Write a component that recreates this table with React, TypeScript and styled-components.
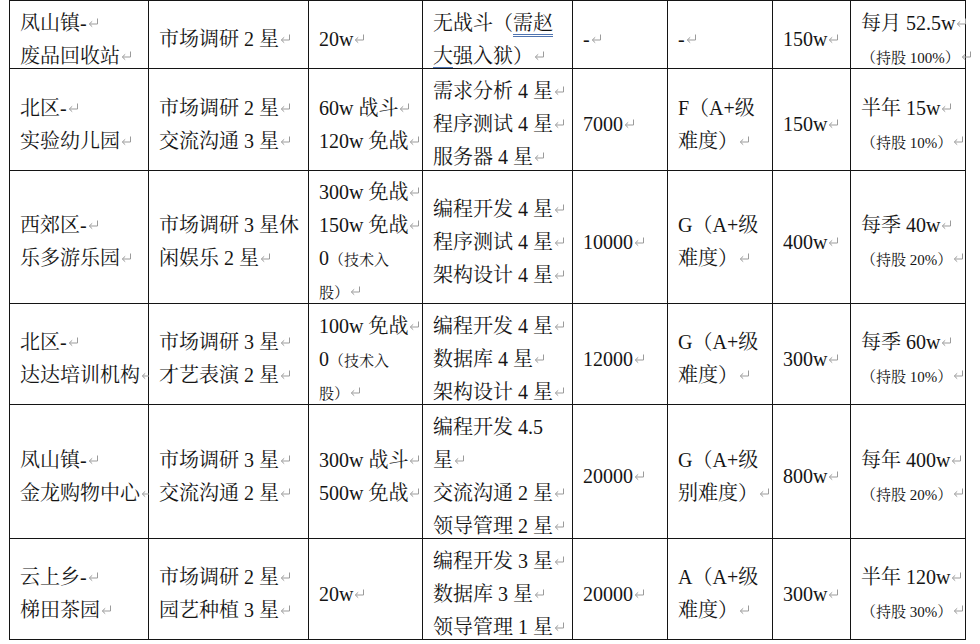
import React from "react";
import styled, { createGlobalStyle } from "styled-components";

const GlobalStyle = createGlobalStyle`
  html, body {
    margin: 0;
    padding: 0;
    background: #ffffff;
  }
  body {
    font-family: "Liberation Serif", "Noto Serif CJK SC", "Noto Sans CJK SC", serif;
  }
`;

type Seg = string | { text: string; small?: boolean; underline?: boolean };
type LineData = { segs: Seg[]; mark: boolean };

const L = (...segs: Seg[]): LineData => ({ segs, mark: true });
const W = (...segs: Seg[]): LineData => ({ segs, mark: false });
const sm = (text: string): Seg => ({ text, small: true });
const ul = (text: string): Seg => ({ text, underline: true });

const rows: LineData[][][] = [
  [
    [L("凤山镇-"), L("废品回收站")],
    [L("市场调研 2 星")],
    [L("20w")],
    [W("无战斗（", ul("需赵")), L(ul("大"), "强入狱）")],
    [L("-")],
    [L("-")],
    [L("150w")],
    [L("每月 52.5w"), L(sm("（持股 100%）"))],
  ],
  [
    [L("北区-"), L("实验幼儿园")],
    [L("市场调研 2 星"), L("交流沟通 3 星")],
    [L("60w 战斗"), L("120w 免战")],
    [L("需求分析 4 星"), L("程序测试 4 星"), L("服务器 4 星")],
    [L("7000")],
    [W("F（A+级"), L("难度）")],
    [L("150w")],
    [L("半年 15w"), L(sm("（持股 10%）"))],
  ],
  [
    [L("西郊区-"), L("乐多游乐园")],
    [W("市场调研 3 星休"), L("闲娱乐 2 星")],
    [L("300w 免战"), L("150w 免战"), W("0", sm("（技术入")), L(sm("股）"))],
    [L("编程开发 4 星"), L("程序测试 4 星"), L("架构设计 4 星")],
    [L("10000")],
    [W("G（A+级"), L("难度）")],
    [L("400w")],
    [L("每季 40w"), L(sm("（持股 20%）"))],
  ],
  [
    [L("北区-"), L("达达培训机构")],
    [L("市场调研 3 星"), L("才艺表演 2 星")],
    [L("100w 免战"), W("0", sm("（技术入")), L(sm("股）"))],
    [L("编程开发 4 星"), L("数据库 4 星"), L("架构设计 4 星")],
    [L("12000")],
    [W("G（A+级"), L("难度）")],
    [L("300w")],
    [L("每季 60w"), L(sm("（持股 10%）"))],
  ],
  [
    [L("凤山镇-"), L("金龙购物中心")],
    [L("市场调研 3 星"), L("交流沟通 2 星")],
    [L("300w 战斗"), L("500w 免战")],
    [W("编程开发 4.5"), L("星"), L("交流沟通 2 星"), L("领导管理 2 星")],
    [L("20000")],
    [W("G（A+级"), L("别难度）")],
    [L("800w")],
    [L("每年 400w"), L(sm("（持股 20%）"))],
  ],
  [
    [L("云上乡-"), L("梯田茶园")],
    [L("市场调研 2 星"), L("园艺种植 3 星")],
    [L("20w")],
    [L("编程开发 3 星"), L("数据库 3 星"), L("领导管理 1 星")],
    [L("20000")],
    [W("A（A+级"), L("难度）")],
    [L("300w")],
    [L("半年 120w"), L(sm("（持股 30%）"))],
  ],
];

const Page = styled.div`
  padding: 0 0 0 9px;
`;

const Table = styled.div`
  display: grid;
  grid-template-columns: 138px 159px 113px 149px 94px 104px 77px 114px;
  grid-template-rows: 67px 101px 132px 100px 133px 100px;
  gap: 1px;
  padding: 1px;
  width: fit-content;
  background: #141414;
`;

const Cell = styled.div`
  background: #ffffff;
  display: flex;
  flex-direction: column;
  justify-content: center;
  padding: 10px 2px 0 10px;
  min-width: 0;
  font-size: 20px;
  color: #151515;
`;

const Line = styled.div`
  line-height: 33px;
  height: 33px;
  white-space: nowrap;
`;

const Small = styled.span`
  font-size: 15px;
`;

const Marked = styled.span`
  text-decoration: underline double #4f74b0;
  text-decoration-thickness: 1px;
  text-underline-offset: 4px;
`;

const MarkSvg = styled.svg`
  display: inline-block;
  width: 11px;
  height: 9px;
  margin-left: 1px;
  vertical-align: 3px;
  overflow: visible;
`;

const ParaMark = () => (
  <MarkSvg viewBox="0 0 11 9" aria-hidden="true">
    <path
      d="M9.5 0.5 V6 H1.5 M4.2 3.3 L1.3 6 L4.2 8.7"
      fill="none"
      stroke="#9b9b9b"
      strokeWidth="1"
      strokeLinejoin="miter"
    />
  </MarkSvg>
);

const renderSeg = (s: Seg, i: number) => {
  if (typeof s === "string") return <React.Fragment key={i}>{s}</React.Fragment>;
  if (s.small) return <Small key={i}>{s.text}</Small>;
  if (s.underline) return <Marked key={i}>{s.text}</Marked>;
  return <React.Fragment key={i}>{s.text}</React.Fragment>;
};

export default function App() {
  return (
    <>
      <GlobalStyle />
      <Page>
        <Table>
          {rows.map((row, r) =>
            row.map((cell, c) => (
              <Cell key={`${r}-${c}`}>
                {cell.map((line, li) => (
                  <Line key={li}>
                    {line.segs.map(renderSeg)}
                    {line.mark && <ParaMark />}
                  </Line>
                ))}
              </Cell>
            ))
          )}
        </Table>
      </Page>
    </>
  );
}
